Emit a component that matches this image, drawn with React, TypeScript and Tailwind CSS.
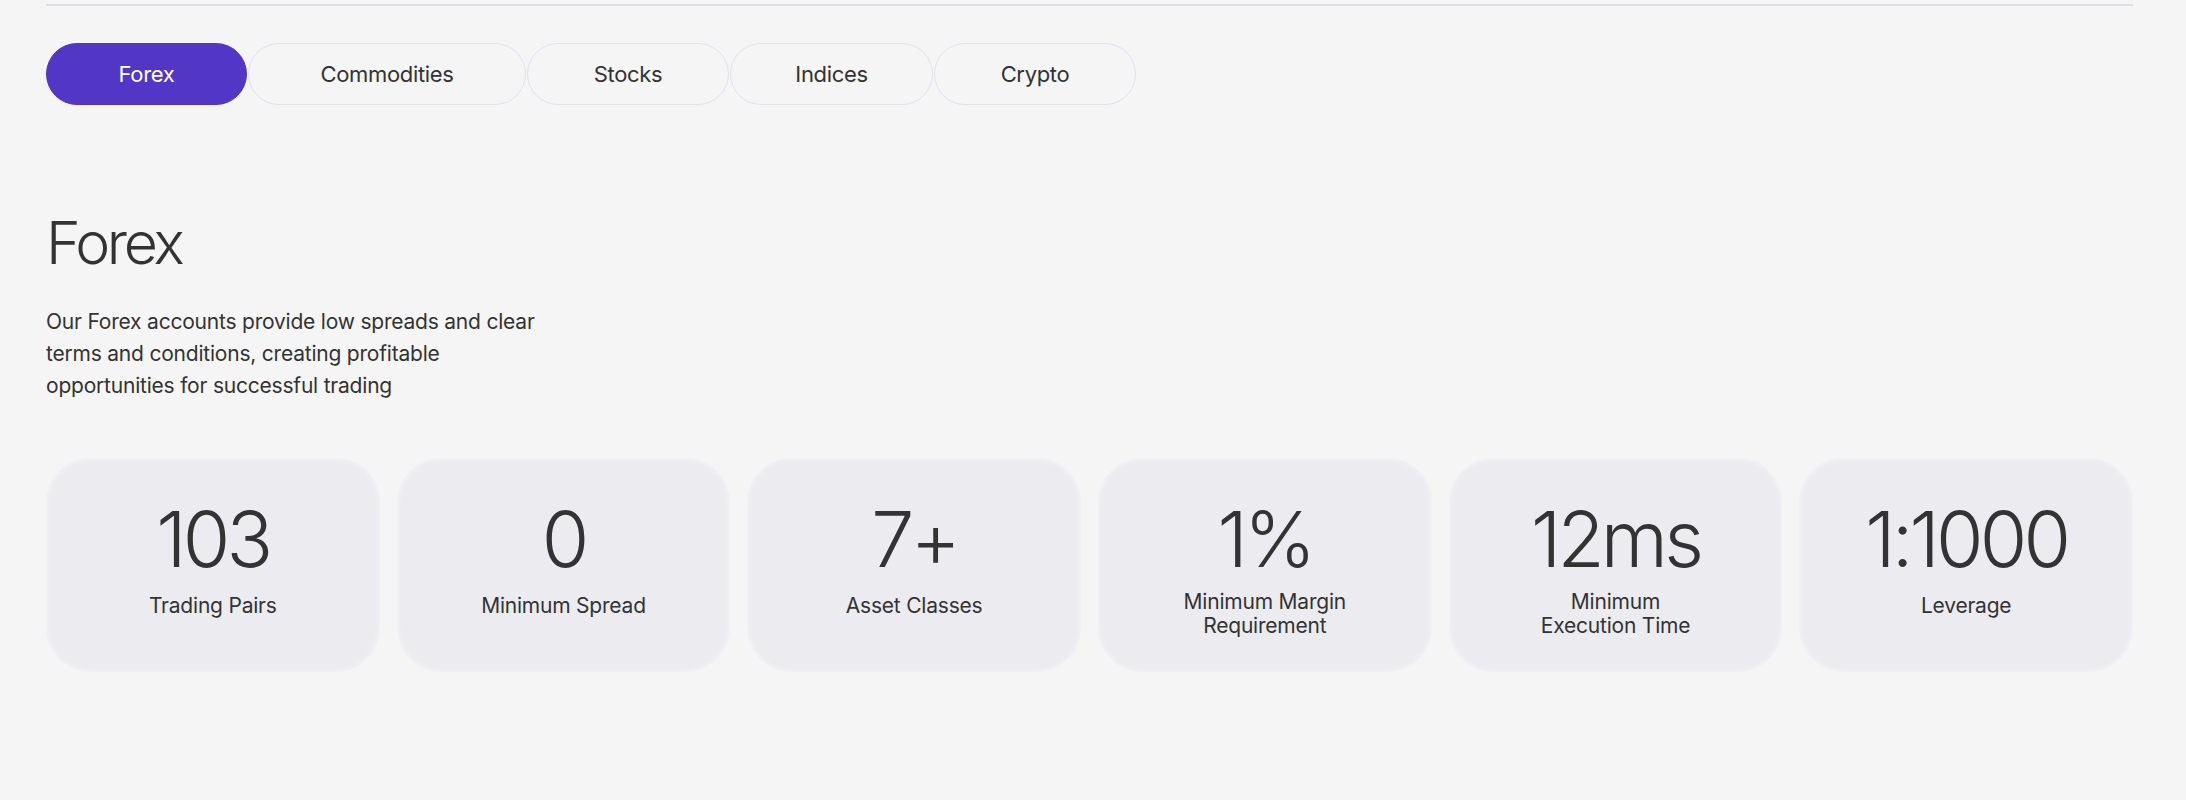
import React from "react";

const tabs = [
  { label: "Forex", w: "w-[201px]" },
  { label: "Commodities", w: "w-[278px]" },
  { label: "Stocks", w: "w-[202px]" },
  { label: "Indices", w: "w-[203px]" },
  { label: "Crypto", w: "w-[202px]" },
];

const stats: { value: string; label: string[] }[] = [
  { value: "103", label: ["Trading Pairs"] },
  { value: "0", label: ["Minimum Spread"] },
  { value: "7+", label: ["Asset Classes"] },
  { value: "1%", label: ["Minimum Margin", "Requirement"] },
  { value: "12ms", label: ["Minimum", "Execution Time"] },
  { value: "1:1000", label: ["Leverage"] },
];

export default function App() {
  return (
    <div
      className="min-h-[800px] w-full bg-[#f5f5f5] text-[#333333]"
      style={{ fontFamily: "Inter, 'Noto Sans', sans-serif" }}
    >
      <div className="ml-[46px] w-[2087px] pt-1">
        <div className="h-[2px] w-full bg-[#dedee6]" />

        <div className="mt-[37px] flex gap-[1px]">
          {tabs.map((t, i) => (
            <button
              key={t.label}
              className={`${t.w} flex h-[62px] items-center justify-center rounded-full border text-[22px] tracking-[-0.015em] ${
                i === 0
                  ? "border-[#5236c6] bg-[#5236c6] text-white"
                  : "border-[#e2e2e8] bg-transparent text-[#333333]"
              }`}
            >
              {t.label}
            </button>
          ))}
        </div>

        <h1 className="mt-[108px] text-[59px] font-light leading-none tracking-[-0.055em] text-[#333333]">
          Forex
        </h1>

        <p className="mt-[34px] w-[520px] text-[21px] leading-[32px] tracking-[-0.01em] text-[#333333]">
          Our Forex accounts provide low spreads and clear terms and conditions, creating profitable
          opportunities for successful trading
        </p>

        <div className="mt-[56px] grid grid-cols-6 gap-[17px]">
          {stats.map((s) => (
            <div
              key={s.value}
              className="flex h-[214px] flex-col items-center rounded-[44px] bg-[#ececf0] pt-[43px] shadow-[0_0_6px_rgba(255,255,255,0.6)_inset]"
            >
              <div className="text-[77px] font-light leading-none tracking-[-0.05em] text-[#333333]">
                {s.value}
              </div>
              <div
                className={`${
                  s.label.length > 1 ? "mt-[12px]" : "mt-[16px]"
                } text-center text-[21px] leading-[24px] tracking-[-0.01em] text-[#333333]`}
              >
                {s.label.map((l) => (
                  <div key={l}>{l}</div>
                ))}
              </div>
            </div>
          ))}
        </div>
      </div>
    </div>
  );
}
